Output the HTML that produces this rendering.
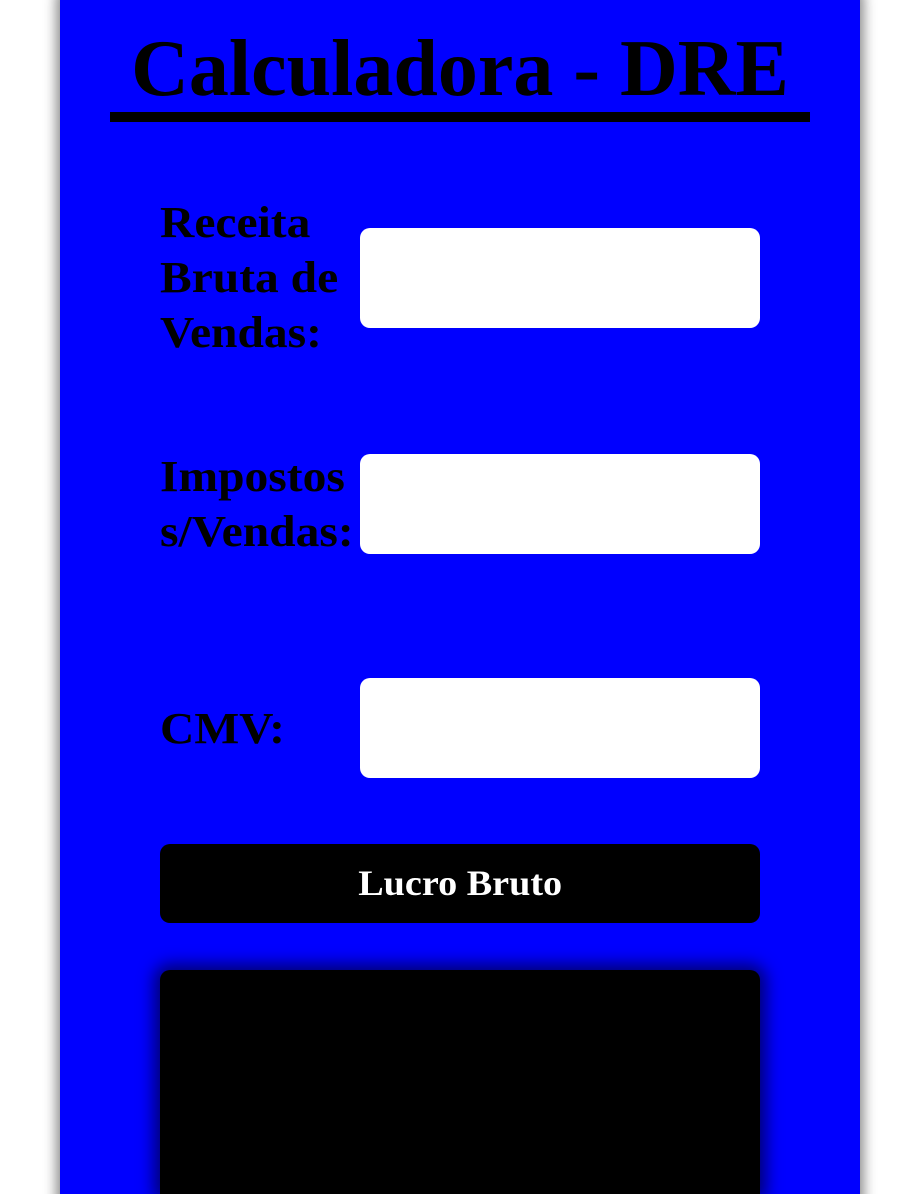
<!DOCTYPE html>
<html><head><meta charset="utf-8"><style>
html,body{margin:0;padding:0;background:#fff;width:920px;height:1194px;overflow:hidden;}
body{font-family:"Liberation Serif",serif;position:relative;}
.c{position:absolute;left:60px;top:-10px;width:800px;height:1224px;background:#00f;border-radius:10px;box-shadow:0 0 12px 4px rgba(0,0,0,.45);}
h1{position:absolute;left:110px;top:21px;width:700px;margin:0;text-align:center;font-size:80px;font-weight:bold;line-height:96px;color:#000;}
.bar{position:absolute;left:110px;top:112px;width:700px;height:10px;background:#000;}
.l{position:absolute;left:160px;width:200px;font-size:44px;font-weight:bold;line-height:55px;color:#000;transform:scaleX(1.08);transform-origin:0 0;white-space:nowrap;}
.i{position:absolute;left:360px;width:400px;height:100px;background:#fff;border-radius:10px;}
.b{position:absolute;left:160px;top:844px;width:600px;height:79px;background:#000;border-radius:10px;color:#fff;font-size:36px;font-weight:bold;text-align:center;line-height:79px;}
.b span{display:inline-block;transform:scaleX(1.06);}
.r{position:absolute;left:160px;top:970px;width:600px;height:224px;background:#000;border-radius:10px 10px 0 0;box-shadow:0 0 16px 6px rgba(0,0,80,.8);}
</style></head><body>
<div class="c"></div>
<h1>Calculadora - DRE</h1>
<div class="bar"></div>
<div class="l" style="top:195px">Receita<br>Bruta de<br>Vendas:</div>
<div class="i" style="top:228px"></div>
<div class="l" style="top:449px">Impostos<br>s/Vendas:</div>
<div class="i" style="top:454px"></div>
<div class="l" style="top:701px">CMV:</div>
<div class="i" style="top:678px"></div>
<div class="b"><span>Lucro Bruto</span></div>
<div class="r"></div>
</body></html>
